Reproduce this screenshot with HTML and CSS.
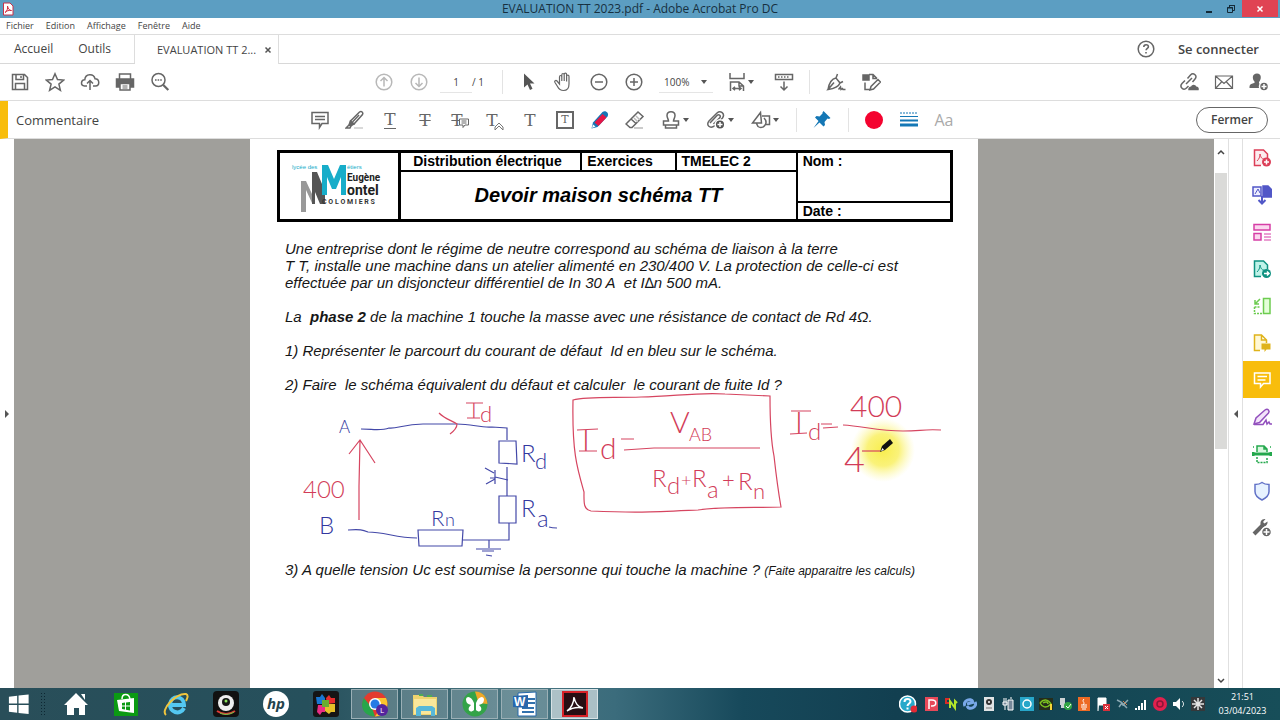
FILE: index.html
```html
<!DOCTYPE html>
<html lang="fr">
<head>
<meta charset="utf-8">
<meta name="viewport" content="width=device-width, initial-scale=1">
<title>EVALUATION TT 2023.pdf - Adobe Acrobat Pro DC</title>
<link rel="stylesheet" href="styles.css">
</head>
<body>
<header class="titlebar">
  <svg class="app-icon" viewBox="0 0 12 14"><path d="M1.500 1h6.500l3 3v9h-9.500z" fill="#fff" stroke="#c8324a"/><path d="M3 10.500c2-1 3-4 2.500-6.500c.500 3 2 4.500 4 4.500c-3-.500-5 .500-6.500 2" fill="none" stroke="#d22b3f"/></svg>
  <h1 class="title">EVALUATION TT 2023.pdf - Adobe Acrobat Pro DC</h1>
  <div class="window-buttons">
    <button class="win" aria-label="Réduire"><svg viewBox="0 0 12 12"><path d="M3 9h6" stroke="#142a38" stroke-width="2"/></svg></button>
    <button class="win" aria-label="Restaurer"><svg viewBox="0 0 12 12" fill="none" stroke="#142a38"><path d="M2.500 4.500h5v5h-5zM2 5h6M4.500 4v-1.500h5v5h-1.500M4 2.500h6"/></svg></button>
    <button class="win close" aria-label="Fermer la fenêtre"><svg viewBox="0 0 12 12"><path d="M3.500 3.500l5 5M8.500 3.500l-5 5" stroke="#fff" stroke-width="1.500"/></svg></button>
  </div>
</header>

<nav class="menubar" aria-label="Menu">
  <button>Fichier</button><button>Edition</button><button>Affichage</button><button>Fenêtre</button><button>Aide</button>
</nav>

<div class="tabs">
  <div class="tabs-home"><button>Accueil</button><button>Outils</button></div>
  <div class="tab-current"><span>EVALUATION TT 2...</span><button aria-label="Fermer l'onglet"><svg viewBox="0 0 8 8"><path d="M1.500 1.500l5 5M6.500 1.500l-5 5" stroke="#555" stroke-width="1.500"/></svg></button></div>
  <div class="tabs-account">
    <button aria-label="Aide en ligne"><svg class="ic" viewBox="0 0 20 20"><circle cx="10" cy="10" r="7.800"/><path d="M7.800 8c0-3 4.600-3 4.600-.300c0 1.800-2.300 1.600-2.300 3.600M10 13v1.600" stroke-width="1.600"/></svg></button>
    <button class="signin">Se connecter</button>
  </div>
</div>

<div class="toolbar main-tools">
  <div class="group">
    <button class="tool" aria-label="Enregistrer"><svg class="ic" viewBox="0 0 20 20"><path d="M2.500 2.500h12l3 3v12h-15zM6 2.500v5h7.500v-5M11 4v2M5.500 17.500v-6h9v6" /></svg></button>
    <button class="tool" aria-label="Favoris"><svg class="ic" viewBox="0 0 20 20"><path d="M10 1.800l2.500 5.800l6.100.500l-4.700 4l1.500 6.200l-5.400-3.400l-5.400 3.400l1.500-6.200l-4.700-4l6.100-.500z"/></svg></button>
    <button class="tool" aria-label="Envoyer"><svg class="ic" viewBox="0 0 20 20"><path d="M7 14h-2.500c-4.500-.500-3.500-6.500.300-6.300c.500-6.500 9-6.500 10.200-1c4.800 0 5 7 .500 7.300h-2.500M10 18v-9M7 11.500l3-3l3 3"/></svg></button>
    <button class="tool" aria-label="Imprimer"><svg class="ic" viewBox="0 0 20 20"><path d="M4.500 7v-5h11v5"/><path d="M1.500 7h17v8h-3v-3h-11v3h-3z" fill="#666"/><path d="M5 11.500h10v6.500h-10z" fill="#fff"/><path d="M7.500 14h5M7.500 16h5" stroke-width="1"/></svg></button>
    <button class="tool" aria-label="Rechercher"><svg class="ic" viewBox="0 0 20 20"><circle cx="8.500" cy="8" r="6.500"/><path d="M13.300 13l5 5" stroke-width="2.200"/><path d="M5 8h7" stroke-dasharray="1.600 1"/></svg></button>
  </div>
  <div class="group center">
    <button class="tool faint" aria-label="Page précédente"><svg class="ic" viewBox="0 0 20 20"><circle cx="10" cy="10" r="7.800"/><path d="M10 14.500v-9M6.500 9l3.500-3.500l3.500 3.500"/></svg></button>
    <button class="tool faint" aria-label="Page suivante"><svg class="ic" viewBox="0 0 20 20"><circle cx="10" cy="10" r="7.800"/><path d="M10 5.500v9M6.500 11l3.500 3.500l3.500-3.500"/></svg></button>
    <input class="page-number" value="1" aria-label="Numéro de page"><span class="page-total">/ 1</span>
    <span class="sep after-page"></span>
    <button class="tool" aria-label="Sélection"><svg class="ic" viewBox="0 0 20 20"><path d="M5 1.500v14l3.500-3l2.500 5.500l2.500-1.200l-2.500-5.300h4.500z" fill="#555" stroke="none"/></svg></button>
    <button class="tool" aria-label="Main"><svg class="ic thin" viewBox="0 0 20 20"><path d="M5.500 12v-7c0-2 2.300-2 2.300 0v4v-6c0-2 2.400-2 2.400 0v6v-6.500c0-2 2.400-1.800 2.400 0v7v-5c0-2 2.400-1.800 2.400 0v7.500c0 4-2 6.500-5.500 6.500c-3.500 0-5-2-6-4l-2.500-4c-1-1.800 1-2.600 2-1.500z"/></svg></button>
    <button class="tool" aria-label="Zoom arrière"><svg class="ic" viewBox="0 0 20 20"><circle cx="10" cy="10" r="7.800"/><path d="M6 10h8"/></svg></button>
    <button class="tool" aria-label="Zoom avant"><svg class="ic" viewBox="0 0 20 20"><circle cx="10" cy="10" r="7.800"/><path d="M6 10h8M10 6v8"/></svg></button>
    <span class="zoom"><select aria-label="Niveau de zoom"><option>100%</option></select><i class="caret"></i></span>
    <button class="tool fit" aria-label="Ajuster la page"><svg class="ic" viewBox="0 0 20 20"><path d="M3 1v5.500h14v-5.500M3.500 19v-9h8.500l4.500 4v5M12 10v4h4.500M6 16.500h8M8 14.800l-2 1.700l2 1.700M12 14.800l2 1.700l-2 1.700"/></svg><i class="caret"></i></button>
    <button class="tool scroll-mode" aria-label="Défilement"><svg class="ic" viewBox="0 0 20 20"><path d="M1.500 2.500h17v5h-17zM10 9.500v8.500M6.500 14.500l3.500 3.500l3.500-3.500"/><path d="M4 5h12" stroke-dasharray="1.500 1.500"/></svg></button>
    <span class="sep"></span>
    <button class="tool" aria-label="Signer"><svg class="ic" viewBox="0 0 20 20"><path d="M2 17.500c1-6 3-10.500 8-11.500l4 5c-1.500 4-5 5.500-12 6.500l6-7M10 6l1.500-4M14 11l3-1.500M12.500 17.500l2-2.500l.5 2.500l1.500-1l.5 1h2.500"/></svg></button>
    <button class="tool" aria-label="Modifier le document"><svg class="ic" viewBox="0 0 20 20"><path d="M2 3h6v5h-6z" fill="#666"/><path d="M8 2.500h4l4 4M12 2.500v4h4M4 10.500v7h5M9 18l1-3.500l7-7l2.500 2.500l-7 7z"/></svg></button>
  </div>
  <div class="group end">
    <button class="tool" aria-label="Partager un lien"><svg class="ic" viewBox="0 0 20 20"><path d="M7 12l6-6M8.500 6.500l3-3.500c3-3 7.500 1 4.500 4l-2.500 3M6 8.500l-3 3c-3 3.500 1.500 7.500 4.500 4.500l2-2"/><path d="M10 17.500c0-2 1.500-2.500 2.500-2c.5-3 4-2.500 4.300 0c1.500-.5 2.500.7 2.200 2z" fill="#666"/></svg></button>
    <button class="tool" aria-label="Courrier"><svg class="ic thin" viewBox="0 0 20 20"><path d="M1.500 4h17v12.500h-17zl8.500 7.500l8.500-7.500M1.500 16.500l6-6.500M18.500 16.500l-6-6.500"/></svg></button>
    <button class="tool" aria-label="Partager"><svg class="ic" viewBox="0 0 20 20"><path d="M8 1.500c5 0 4.500 6 2 8.500v1.500c2 .5 2.500 1 2 4.500h-11.500c0-4 1-4 5-5v-1.500c-2.500-2.500-2.500-8 2.500-8z" fill="#666" stroke="none"/><circle cx="15" cy="14.500" r="4.500" fill="#666" stroke="#fff"/><path d="M15 12v5M12.500 14.500h5" stroke="#fff"/></svg></button>
  </div>
</div>

<div class="toolbar comment-tools">
  <h2 class="panel-name">Commentaire</h2>
  <div class="group center">
    <button class="tool" aria-label="Note"><svg class="ic" viewBox="0 0 20 20"><path d="M2 2.500h16v11h-6l-2.500 4v-4h-7.500zM5 6.500h10M5 9.500h10"/></svg></button>
    <button class="tool" aria-label="Surligner"><svg class="ic" viewBox="0 0 20 20"><path d="M5.500 11l9-9c2-1.500 4 .5 3 2.500l-8.500 9.500l-3.500.5z"/><path d="M5.500 11l-1.500 4l1.500 1l3.500-2z" fill="#666"/><path d="M4 15l-3 3h4l1-2M7.500 12l6.500-7" /><path d="M9 18h9" stroke="#ccc"/></svg></button>
    <button class="tool" aria-label="Souligner"><span class="letter underlined">T</span></button>
    <button class="tool" aria-label="Barrer"><span class="letter struck">T</span></button>
    <button class="tool" aria-label="Remplacer"><span class="letter struck">T</span><svg class="mini" viewBox="0 0 10 10"><path d="M.500 1h9v6h-3.500l-2 2.500v-2.500h-3.500z" fill="#fff" stroke="#666"/><path d="M2.500 3h5M2.500 5h5" stroke="#666"/></svg></button>
    <button class="tool" aria-label="Insérer"><span class="letter">T</span><svg class="mini low" viewBox="0 0 10 10"><path d="M1 6l4-4l4 4v3l-4-4l-4 4z" fill="none" stroke="#777"/></svg></button>
    <button class="tool" aria-label="Texte"><span class="letter">T</span></button>
    <button class="tool" aria-label="Zone de texte"><span class="letter boxed">T</span></button>
    <button class="tool" aria-label="Crayon"><svg class="ic" viewBox="0 0 20 20"><path d="M1.500 18.500l1.500-6l9.500-10.500c3-2 7 1 5 4.500l-10 10.500z" fill="#1675b5" stroke="none"/><path d="M4.500 12.500l8-8.500l4 3.500l-8 8.500z" fill="#e51646" stroke="none"/><path d="M2 18l1-3.500l2.500 2z" fill="#fff" stroke="none"/></svg></button>
    <button class="tool" aria-label="Gomme"><svg class="ic" viewBox="0 0 20 20"><path d="M2 13l11-11l5 4.500l-11 11h-2l-4-3.500zM6 9l5 4.500"/><path d="M9 8l4 4M11 6l4 4M9 18h9" stroke="#bbb"/></svg></button>
    <button class="tool more" aria-label="Tampon"><svg class="ic" viewBox="0 0 20 20"><path d="M7.500 11c0-2-1.500-3-1.500-5.500c0-5 8-5 8 0c0 2.500-1.500 3.500-1.500 5.500h5v4h-15v-4zM4.500 15v3h11v-3"/></svg><i class="caret"></i></button>
    <button class="tool more" aria-label="Joindre"><svg class="ic" viewBox="0 0 20 20"><path d="M4 13l7-7.500c2-2 4.500.5 2.500 2.500l-6 6M9 15.500c-5 4-9.500-.5-6-4.500l8-8c3.500-3 8.500.5 5.500 5l-2 2"/><circle cx="14" cy="14.500" r="4.800" fill="#555" stroke="#fff"/><path d="M14 12v5M11.500 14.500h5" stroke="#fff"/></svg><i class="caret"></i></button>
    <button class="tool more" aria-label="Formes"><svg class="ic" viewBox="0 0 20 20"><path d="M9.500 2.500l-8 10.500h9zM11 6h7.500v8.500h-4M13 8c5 5-1 12-6 8.500l-1.500-3"/></svg><i class="caret"></i></button>
    <span class="sep"></span>
    <button class="tool" aria-label="Épingler"><svg class="ic" viewBox="0 0 20 20"><path d="M10.500 2.500l1-1.500l7 7l-1.500 1l-1.500-.500l-3 3.500l.500 3l-1.500 1.500l-4-4l-6 5.500l5-7l-3.500-3.500l1.500-1.500l3 .500l3-3z" fill="#1477b5" stroke="none"/></svg></button>
    <span class="sep"></span>
    <button class="tool" aria-label="Couleur"><span class="swatch"></span></button>
    <button class="tool" aria-label="Épaisseur"><svg class="ic blue" viewBox="0 0 20 20"><path d="M1 3h18" stroke-width="1" stroke-dasharray="2 1"/><path d="M1 6.500h18" stroke-width="1"/><path d="M1 10.500h18" stroke-width="2"/><path d="M1 15h18" stroke-width="3"/></svg></button>
    <button class="tool font-style" aria-label="Style du texte">Aa</button>
  </div>
  <div class="group end"><button class="done">Fermer</button></div>
</div>

<main class="workspace">
  <button class="pane-toggle left" aria-label="Volet de navigation"><svg viewBox="0 0 6 8"><path d="M1 0l4 4l-4 4z"/></svg></button>
  <section class="canvas">
    <article class="sheet">
      <table class="heading">
        <colgroup><col class="c-logo"><col class="c-subject"><col class="c-type"><col class="c-class"><col class="c-name"></colgroup>
        <tr class="r1">
          <td class="logo" rowspan="3">
            <svg viewBox="0 0 94 52" role="img" aria-label="Lycée des Métiers Eugène Montel Colomiers">
              <path d="M11 52v-31h5l6 13v-13h3v22h-3l-6-13v22z" fill="#999"/>
              <path d="M22 34v-22h5l5 12v-12h3v32h-5l-5-12v12h-3z" fill="#555"/>
              <path d="M32 35v-30h6l6 14l6-14h6v30h-5v-18l-5 12h-4l-5-12v18z" fill="#17adc9"/>
              <text x="2" y="9" class="lg-small">lycée des</text><text x="57" y="9" class="lg-small">étiers</text>
              <text x="57" y="21" class="lg-name">Eugène</text><text x="57" y="35" class="lg-name big">ontel</text>
              <text x="32" y="44" class="lg-town">C O L O M I E R S</text>
            </svg>
          </td>
          <td class="cell">Distribution électrique</td><td class="cell">Exercices</td><td class="cell">TMELEC 2</td><td class="cell name" rowspan="2">Nom :</td>
        </tr>
        <tr class="r2"><td class="doc-title" colspan="3" rowspan="2">Devoir maison schéma TT</td></tr>
        <tr class="r3"><td class="cell name">Date :</td></tr>
      </table>
      <div class="statement">
        <p>Une entreprise dont le régime de neutre correspond au schéma de liaison à la terre<br>T T, installe une machine dans un atelier alimenté en 230/400 V. La protection de celle-ci est<br>effectuée par un disjoncteur différentiel de In 30 A&nbsp; et I∆n 500 mA.</p>
        <p>La&nbsp; <strong>phase 2</strong> de la machine 1 touche la masse avec une résistance de contact de Rd 4Ω.</p>
        <p>1) Représenter le parcourt du courant de défaut&nbsp; Id en bleu sur le schéma.</p>
        <p>2) Faire&nbsp; le schéma équivalent du défaut et calculer&nbsp; le courant de fuite Id ?</p>
      </div>
      <svg class="ink" viewBox="277 393 676 168">
        <defs><radialGradient id="halo"><stop offset="0" stop-color="#f8ee4e"/><stop offset=".5" stop-color="#faf27a"/><stop offset="1" stop-color="#fdf9b0" stop-opacity="0"/></radialGradient></defs>
        <circle cx="883" cy="450" r="32" fill="url(#halo)"/>
        <g class="blue-ink">
          <path d="M361 429c12 0 20 2 28-1c8 1 15-4 34-4h34c15 0 24 4 35 3l15 1v12M499 441h17l1 23l-18-1zM507 467v29M499 496h17v27h-17zM509 523v17h-46M348 530c12-1 15 0 20 2c17 0 28 6 49 6M418 530h45l-1 16h-43zM489 540v8M476 549h25M482 551h12M486 555l6 1"/>
          <path d="M485 468l9 5M486 484l9-5M490 478h5M495 470v14M495 477l13 3"/>
          <text x="339" y="433" class="s17">A</text><text x="319" y="534" class="s24">B</text>
          <text x="521" y="462" class="s24">R</text><text x="535" y="469" class="s22">d</text>
          <text x="521" y="517" class="s24">R</text><text x="537" y="527" class="s24">a</text>
          <text x="431" y="526" class="s22">R</text><text x="445" y="526" class="s18">n</text>
          <path d="M549 527c3 1 5 1 8 1"/>
        </g>
        <g class="red-ink">
          <path d="M359 520v-34l1-46M349 454l11-14l15 23M439 413c6 6 12 7 18 11c0 4-3 7-7 10"/>
          <text x="303" y="498" class="s24">400</text>
          <text x="471" y="418" class="s22">I</text><path d="M466 403h17M467 418h13"/><text x="480" y="422" class="s22">d</text>
          <path d="M573 400c14-4 40-2 68-3c30 0 55-5 84-3l45 2c0 20 0 40 4 60c2 18 4 34 7 51c-25 1-55-1-83 3c-45 2-60 3-107 1c-8-1-7-10-7-19c-7-24-12-40-11-92z"/>
          <text x="582" y="451" class="s30">I</text><path d="M577 430l21-1M579 451h18"/><text x="600" y="459" class="s30">d</text>
          <path d="M621 439h13M624 450l30-2l106 0"/>
          <text x="670" y="433" class="s30">V</text>
          <text x="689" y="441" class="s18">AB</text>
          <text x="652" y="487" class="s24">R</text><text x="667" y="494" class="s24">d</text><text x="681" y="486" class="s18">+</text>
          <text x="692" y="487" class="s24">R</text><text x="707" y="498" class="s24">a</text><text x="722" y="488" class="s22">+</text>
          <text x="738" y="490" class="s24">R</text><text x="753" y="499" class="s22">n</text>
          <text x="795" y="433" class="s30">I</text><path d="M791 411h20M790 434l17-1"/><text x="808" y="440" class="s24">d</text>
          <path d="M821 424h11M823 428l15-1"/>
          <text x="850" y="417" class="s30">400</text>
          <path d="M843 425c20 1 35 6 60 6c18 0 20-2 38-1"/>
          <text x="844" y="472" class="s36">4</text><path d="M862 451h18"/>
        </g>
        <path d="M880 452l2-6l8-7l3 4l-8 7z" fill="#111"/><path d="M881 451l1.500-3l1.500 2z" fill="#fff"/>
      </svg>
      <p class="question-3">3) A quelle tension Uc est soumise la personne qui touche la machine ? <small>(Faite apparaitre les calculs)</small></p>
    </article>
  </section>
  <div class="scrollbar">
    <button aria-label="Défiler vers le haut"><svg viewBox="0 0 8 6"><path d="M1 5l3-3l3 3"/></svg></button>
    <div class="track"><div class="thumb"></div></div>
    <button aria-label="Défiler vers le bas"><svg viewBox="0 0 8 6"><path d="M1 1l3 3l3-3"/></svg></button>
  </div>
  <button class="pane-toggle right" aria-label="Volet des outils"><svg viewBox="0 0 6 8"><path d="M5 0l-4 4l4 4z"/></svg></button>
  <aside class="tool-pane">
    <button aria-label="Créer un PDF"><svg class="ic" viewBox="0 0 20 20" style="color:#dc3e57"><path d="M9 17.500h-6.500v-15.500h9l4 4v4" fill="#fcecef"/><path d="M5 13c2-2 3-4 3-7c1 4 2 5 4 5" stroke-width="1"/><circle cx="14.500" cy="14" r="4.500" fill="currentColor" stroke="none"/><path d="M14.500 11.500v5M12 14h5" stroke="#fff"/></svg></button>
    <button aria-label="Combiner"><svg class="ic" viewBox="0 0 20 20" style="color:#5157c7"><path d="M1 2h8v9h-8z" fill="#eef"/><path d="M11 1h5l3.500 3.500v7.500h-8.500z" fill="currentColor"/><path d="M3 9l3-5l2 4" stroke-width="1"/><path d="M10 11v7M6.500 15l3.500 3.500l3.500-3.500" stroke-width="2"/></svg></button>
    <button aria-label="Organiser les pages"><svg class="ic" viewBox="0 0 20 20" style="color:#d63fa6"><path d="M2 2.500h16v5.500h-16zM2 11.500h7v6.500h-7z" fill="#fbd7ef"/><path d="M12 12h7M12 15h7M12 18h7" stroke-width="1"/></svg></button>
    <button aria-label="Exporter"><svg class="ic" viewBox="0 0 20 20" style="color:#0f9281"><path d="M9 17.500h-6.500v-15.500h9l4 4v4" fill="#bff3e9"/><path d="M5 13c2-2 3-4 3-7c1 4 2 5 4 5" stroke-width="1"/><circle cx="14.500" cy="14.500" r="4.500" fill="currentColor" stroke="none"/><path d="M12 14.500h5M15 12.500l2 2l-2 2" stroke="#fff"/></svg></button>
    <button aria-label="Comparer"><svg class="ic" viewBox="0 0 20 20" style="color:#6dcc50"><path d="M11.500 2.500h6.500v15h-6.500z" fill="#e4ffd9"/><path d="M8 3l-5 5M3 4v4h4"/><path d="M2.500 11v6.500h8M2.500 11h6" stroke-dasharray="2 1"/></svg></button>
    <button aria-label="Envoyer pour commentaire"><svg class="ic" viewBox="0 0 20 20" style="color:#dfb31b"><path d="M8 17.500h-5.500v-15.500h7l5 5v3M9.500 2v5h5" fill="#fff8d5"/><path d="M9.500 10.500h9v6h-4l-2 2.500v-2.500h-3z" fill="currentColor" stroke="none"/></svg></button>
    <button class="active" aria-label="Commentaire"><svg class="ic" viewBox="0 0 20 20" style="color:#fff"><path d="M2.500 3h15.500v10.500h-6.500l-3 3.500v-3.500h-6zM5.500 6.500h9.500M5.500 10h8"/></svg></button>
    <button aria-label="Remplir et signer"><svg class="ic" viewBox="0 0 20 20" style="color:#9250bd"><path d="M2 17l2-6l9-8c3-2 5 1 3.500 3l-9 9.500z" fill="#f3e4fa"/><path d="M2 17.500h9l3-4.500l1 4l2-2l1 2h2"/></svg></button>
    <button aria-label="Numérisation"><svg class="ic" viewBox="0 0 20 20" style="color:#24a84d"><path d="M5 8v-6h7l3 3v3M12 2v3h3" fill="#d9f8df"/><path d="M1 8v4M19 8v4M1 10h18" stroke-width="3"/><path d="M5 13v5.500h10v-5.500" stroke-dasharray="2 1"/><path d="M1 3h1M18 3h1"/></svg></button>
    <button aria-label="Protéger"><svg class="ic" viewBox="0 0 20 20" style="color:#6171c7"><path d="M10 1.500c2 1.500 4 2 7 2v7c0 4-4 7-7 8.500c-3-1.500-7-4.500-7-8.500v-7c3 0 5-.500 7-2z" fill="#e7f2ff"/></svg></button>
    <button aria-label="Plus d'outils"><svg class="ic" viewBox="0 0 20 20"><path d="M2 16l9-9" stroke-width="4"/><path d="M13.500 1c-4-.500-6 3-4.500 6.500c3 2.500 7 0 6.500-4l-3 2l-1.500-1.500z" fill="#666" stroke="none"/><circle cx="14.500" cy="14" r="5" fill="#666" stroke="#fff"/><path d="M14.500 11v6M11.500 14h6" stroke="#fff"/></svg></button>
  </aside>
</main>

<footer class="taskbar">
  <button class="start" aria-label="Démarrer"><svg viewBox="0 0 24 24"><path d="M1 4l9-1v8.500h-9zM11.500 2.700l11-1.200v10h-11zM1 13h9v8.500l-9-1zM11.500 13h11v10l-11-1.300z" fill="#fff"/></svg></button>
  <span class="grip"></span>
  <div class="pinned">
    <button aria-label="Accueil"><svg viewBox="0 0 26 26"><path d="M13 2l12 12h-3v10h-6v-7h-5v7h-7v-10h-3zM18 3h4v6z" fill="#fff"/></svg></button>
    <button aria-label="Store"><svg viewBox="0 0 26 26"><path d="M1 2h24v23h-24z" fill="#0b9a13"/><path d="M9 8c0-6 7-6 8 0" fill="none" stroke="#fff" stroke-width="1.500"/><path d="M4 9l17-2v15l-15-2z" fill="#fff"/><path d="M9 12l3-.500v3h-3zM13 11.500l4-.500v3.500h-4zM9 15.500h3v3l-3-.500zM13 15.500h4v4l-4-.800z" fill="#0b9a13"/></svg></button>
    <button aria-label="Internet Explorer"><svg viewBox="0 0 26 26"><path d="M21 17c-4 8-15 4-14-4c1-9 14-9 14 1h-13" fill="none" stroke="#54c8f1" stroke-width="4"/><path d="M3 24c-6-5 10-22 20-21c3 1 1 5 0 7" fill="none" stroke="#f0c53d" stroke-width="2"/></svg></button>
    <button aria-label="Webcam"><svg viewBox="0 0 26 26"><rect width="26" height="26" rx="4" fill="#111"/><path d="M4 20c6 4 12 4 18 0" fill="none" stroke="#e23a36" stroke-width="2"/><path d="M7 22c4 2 9 2 14-1" fill="none" stroke="#5fd34a"/><circle cx="13" cy="12" r="8" fill="#eee"/><circle cx="13" cy="11" r="4" fill="#151515"/><circle cx="13" cy="10" r="1.500" fill="#8ae35b"/></svg></button>
    <button aria-label="HP"><svg viewBox="0 0 26 26"><circle cx="13" cy="13" r="13" fill="#fff"/><text x="4" y="18" class="hp">hp</text></svg></button>
    <button aria-label="Puzzle"><svg viewBox="0 0 26 26"><rect width="26" height="26" rx="3" fill="#151515"/><path d="M3 6h4l2-3l3 4v6h-8z" fill="#1877d2"/><path d="M13 7l3-3l2 3h4v5l-8 1z" fill="#e62d2d"/><path d="M5 14h7v7h-3l-2 3l-3-3z" fill="#e92d85"/><path d="M12 13h10v8h-4l-2 2l-4-3z" fill="#e6c128"/><path d="M9 9h7v7h-7z" fill="#69ad30"/></svg></button>
  </div>
  <div class="running">
    <button aria-label="Chrome"><svg viewBox="0 0 26 26"><circle cx="13" cy="13" r="12.500" fill="#e33b2e"/><path d="M2 7l8 10l3 8.500c-11 0-16-10-11-18.500z" fill="#27a64b"/><path d="M13 7h11c4 8-1 18-11 18.500l6-9z" fill="#fbc52d"/><circle cx="13" cy="13" r="6" fill="#fff"/><circle cx="13" cy="13" r="4.500" fill="#267be5"/><circle cx="20" cy="19" r="6" fill="#55249d"/><text x="18" y="22" class="badge">L</text></svg></button>
    <button aria-label="Explorateur"><svg viewBox="0 0 26 26"><path d="M1 4h9l2 2h13v18h-24z" fill="#efd36e"/><path d="M2 8h22v15h-22z" fill="#fae79b"/><path d="M7 4h4M15 5h5" stroke="#4eab55" stroke-width="2"/><path d="M4 25v-8l3-2h13l3 2v8h-4v-5h-10v5z" fill="#58b8d9"/></svg></button>
    <button aria-label="Papillon"><svg viewBox="0 0 26 26"><circle cx="13" cy="13" r="12.500" fill="#33a348"/><path d="M13 .500c8 0 12 6 12.500 12.500l-9-1z" fill="#f0a72a"/><path d="M12 12c-2-6-7-8-8-4c0 4 2 5 5 6c-5 4-1 9 3 5zM14 12c2-6 7-8 8-4c0 4-2 5-5 6c5 4 1 9-3 5z" fill="#fff"/></svg></button>
    <button aria-label="Word"><svg viewBox="0 0 26 26"><path d="M6 2l18-1v24h-18z" fill="#fff" stroke="#2769aa"/><path d="M16 8h7M16 12h7M10 17h12M10 21h12" stroke="#3271ad" stroke-width="2"/><path d="M1 5l15-1v13l-15-1z" fill="#2867ac"/><text x="2" y="15" class="word">W</text></svg></button>
    <button class="focused" aria-label="Acrobat"><svg viewBox="0 0 26 26"><rect x="1" y="1" width="24" height="24" fill="#270e13" stroke="#d62228" stroke-width="2"/><path d="M5 20c4-2 7-9 7-14c1 6 4 10 9 11c-5-1-10-1-16 3" fill="none" stroke="#fff" stroke-width="1.500"/></svg></button>
  </div>
  <div class="tray">
    <svg class="help-icon" viewBox="0 0 18 18"><circle cx="8.500" cy="9" r="8" fill="#28a9ca" stroke="#fff" stroke-width="1.500"/><path d="M5.500 7c0-4 6-4 6-.500c0 2-3 2-3 4.500M8.500 12.500v2" fill="none" stroke="#fff" stroke-width="2"/><circle cx="15" cy="14" r="3.500" fill="#e32934"/></svg>
    <svg viewBox="0 0 14 14"><path d="M0 0h13v14h-13z" fill="#e64959"/><path d="M4 12v-9h3c5 0 5 6 0 6h-1" fill="none" stroke="#fff" stroke-width="1.500"/></svg>
    <svg viewBox="0 0 14 14"><path d="M1 1h5v2h-3v2h3v2h-5z" fill="#d82b28"/><path d="M6 11v-7l5 7v-7l2 2" fill="none" stroke="#b3e52b" stroke-width="2"/></svg>
    <svg viewBox="0 0 14 14"><path d="M2 9c-3-5 6-9 8-4M12 5c3 5-6 9-8 4M4 7l7-2" fill="none" stroke="#79a8e8" stroke-width="3"/></svg>
    <svg viewBox="0 0 14 14"><path d="M2 0h10v14h-10z" fill="#e1e4e5"/><circle cx="7" cy="5" r="3" fill="#333"/><circle cx="7" cy="5" r="1" fill="#fff"/><path d="M4 11h6" stroke="#777"/></svg>
    <svg viewBox="0 0 14 14"><path d="M7 3h5v10h-5zM9 1h2M3 1v4M5 1v4M2 5h4v3h-4zM4 8v5" fill="#789" stroke="#fff"/></svg>
    <svg viewBox="0 0 14 14"><path d="M0 0h14v14h-14z" fill="#27a6c9"/><circle cx="7" cy="7" r="4" fill="none" stroke="#fff" stroke-width="1.500"/></svg>
    <svg viewBox="0 0 14 14"><path d="M0 1h14v12h-14z" fill="#252d1b"/><path d="M1 6c4-5 9-3 11 1c-5 5-9 3-11-1M4 6c3-2 5-1 5 1" fill="none" stroke="#7cc321" stroke-width="1.500"/><path d="M12 7v6" stroke="#f6d539" stroke-width="2"/></svg>
    <svg viewBox="0 0 14 14"><path d="M2 1h5v6h2v4h-6v-3h-1z" fill="#ccd2d4"/><circle cx="10" cy="9" r="4" fill="#31a543"/><path d="M8 9l2 2l3-4" fill="none" stroke="#fff"/></svg>
    <svg viewBox="0 0 14 14"><path d="M1 0h12v14h-12z" fill="#ed6a24"/><path d="M7 2c-3 3 2 3-1 6M4 8h6M4 10h6M5 12h4" fill="none" stroke="#fff"/></svg>
    <svg viewBox="0 0 14 14"><path d="M2 14v-13h8v7h-7" fill="#fff" stroke="#fff"/><path d="M7 7h7v7h-7z" fill="#d9303b"/><path d="M9 9l3 3M12 9l-3 3" stroke="#fff"/></svg>
    <svg viewBox="0 0 14 14"><path d="M2 3l4 2l2 3l5-5M4 10l3-4l5 5" fill="none" stroke="#8ba9b3" stroke-width="1.500"/><path d="M8 4l4 4" stroke="#d6804d"/></svg>
    <svg viewBox="0 0 14 14"><path d="M2 13v-2M5 13v-4M8 13v-7M11 13v-10" stroke="#fff" stroke-width="2"/></svg>
    <svg viewBox="0 0 14 14"><circle cx="7" cy="7" r="7" fill="#e2214e"/><circle cx="7" cy="7" r="3" fill="none" stroke="#8c1638" stroke-width="1.500"/></svg>
    <svg viewBox="0 0 14 14"><path d="M1 5h3l4-4v12l-4-4h-3z" fill="#fff"/><path d="M10 4c2 2 2 4 0 6" fill="none" stroke="#fff"/></svg>
    <svg viewBox="0 0 14 14"><path d="M0 0h14v14h-14z" fill="#35383a"/><path d="M7 1v12M1 7h12M3 3l8 8M11 3l-8 8" stroke="#e5e5e5" stroke-width="1.500"/></svg>
  </div>
  <div class="clock"><time>21:51</time><span>03/04/2023</span></div>
</footer>
</body>
</html>
```
FILE: styles.css
```css
* { box-sizing: border-box; }
body {
  margin: 0;
  min-height: 100vh;
  display: flex;
  flex-direction: column;
  font: 12px/16px "Open Sans", "Noto Sans", sans-serif;
  color: #444;
  background: #fff;
}
button, input, select { font: inherit; color: inherit; border: 0; padding: 0; margin: 0; background: none; }
button { display: flex; align-items: center; justify-content: center; }
svg { display: block; flex: none; }
h1, h2 { margin: 0; font-size: inherit; font-weight: 400; }
.ic { width: 20px; height: 20px; fill: none; stroke: currentColor; stroke-width: 1.5; color: #666; }
.ic.thin { stroke-width: 1.2; }
.ic.blue { color: #1477b5; }
.caret { border: 3px solid transparent; border-top: 4px solid #555; border-bottom: 0; flex: none; }

.titlebar { height: 18px; background: #5c9ec2; display: grid; grid-template-columns: 1fr auto 1fr; align-items: center; }
.app-icon { width: 12px; height: 14px; margin-left: 2px; }
.title { color: #17303f; line-height: 18px; }
.window-buttons { display: flex; justify-content: flex-end; height: 17px; align-self: start; margin-right: 2px; }
.win { width: 22px; }
.win svg { width: 12px; height: 12px; }
.win.close { width: 36px; background: #e04353; }

.menubar { height: 17px; display: flex; gap: 12px; padding-left: 6px; font-size: 9px; border-bottom: 1px solid #ddd; }
.tabs { height: 29px; display: flex; border-bottom: 1px solid #d8d8d8; }
.tabs-home { display: flex; gap: 25px; padding: 0 23px 0 14px; border-right: 1px solid #ddd; }
.tab-current { display: flex; align-items: center; gap: 8px; padding: 0 6px 0 22px; font-size: 11px; border-right: 1px solid #ddd; background: #fff; margin-bottom: -1px; }
.tab-current svg { width: 8px; height: 8px; }
.tabs-account { margin-left: auto; display: flex; gap: 22px; padding-right: 21px; }
.signin { font-size: 13px; font-weight: 600; }

.toolbar { display: grid; grid-template-columns: 1fr auto 1fr; align-items: center; border-bottom: 1px solid #ddd; }
.main-tools { height: 37px; padding: 0 4px 0 2px; }
.comment-tools { height: 38px; border-left: 8px solid #f8bd0c; padding: 0 12px 0 8px; }
.group { display: flex; align-items: center; }
.group.end { justify-content: flex-end; }
.main-tools .center { margin-right: 24px; }
.comment-tools .center { margin-right: 20px; }
.tool { width: 35px; height: 30px; }
.faint .ic { color: #b8b8b8; }
.page-number { width: 32px; height: 22px; margin-left: 4px; text-align: center; font-size: 10px; border-bottom: 1px solid #e5e5e5; }
.page-total { width: 16px; font-size: 10px; white-space: nowrap; }
.sep { width: 1px; height: 24px; margin: 0 8px; background: #e3e3e3; }
.sep.after-page { margin-left: 14px; }
.zoom { display: flex; align-items: center; margin-left: 8px; width: 54px; height: 22px; border-bottom: 1px solid #e5e5e5; }
.zoom select { appearance: none; width: 42px; padding-left: 5px; font-size: 10px; }
.fit { margin-left: 10px; gap: 1px; }
.scroll-mode { margin-left: 8px; }
.more { width: 45px; gap: 2px; }
.panel-name { font-size: 13px; }
.letter { font: 17px/18px "DejaVu Serif", serif; color: #666; }
.underlined { border-bottom: 1px solid #666; line-height: 17px; }
.struck { text-decoration: line-through; text-decoration-thickness: 1px; }
.boxed { font-size: 11px; line-height: 14px; border: 2px solid #666; width: 18px; height: 18px; }
.mini { width: 10px; height: 10px; margin: 6px 0 0 -4px; }
.mini.low { margin-top: 12px; }
.swatch { width: 18px; height: 18px; border-radius: 50%; background: #f4032f; }
.font-style { color: #aaa; font-size: 16px; }
.done { width: 72px; height: 26px; border: 1px solid #666; border-radius: 13px; font-weight: 600; }

.workspace { flex: 1; display: flex; }
.pane-toggle { width: 14px; background: #fff; }
.pane-toggle.right { width: 15px; border: solid #e0e0e0; border-width: 0 1px; }
.pane-toggle svg { width: 6px; height: 8px; fill: #555; }
.canvas { flex: 1; display: flex; justify-content: center; background: #a09f9b; }
.sheet { width: 728px; max-width: 100%; background: #fff; padding: 11px 25px 20px 27px; font: italic 15px/17px "Liberation Sans", Arial, sans-serif; color: #161616; }
.heading { width: 100%; border-collapse: collapse; table-layout: fixed; color: #000; font-style: normal; font-weight: 700; border: 3px solid #000; }
.heading td { border: 2px solid #000; padding: 0 5px; }
.c-logo { width: 18%; } .c-subject { width: 27%; } .c-type { width: 14%; } .c-class { width: 18%; } .c-name { width: 23%; }
.r1 { height: 19px; } .r2 { height: 31px; } .r3 { height: 18px; }
.heading .cell { line-height: 16px; font-size: 14px; white-space: nowrap; }
.heading .cell:nth-child(2) { padding-left: 12px; }
.heading .name { vertical-align: top; }
.heading .doc-title { text-align: center; font-size: 20px; font-style: italic; line-height: 22px; }
.heading .logo { padding: 0 10px; border-right-width: 3px; }
.logo svg { width: 94px; height: 52px; }
.lg-small { font: 6px "Liberation Sans", sans-serif; fill: #17adc9; }
.lg-name { font: 700 10px "Roboto", sans-serif; fill: #222; }
.lg-name.big { font-size: 14px; }
.lg-town { font: 700 7px "Roboto", sans-serif; fill: #333; }
.statement { padding: 18px 0 0 8px; }
.statement p { margin: 0 0 17px; }
.statement p:last-child { margin: 0; }
.question-3 { margin: 0 0 0 8px; }
.question-3 small { font-size: 12px; }
.ink { width: 100%; overflow: visible; }
.ink g { fill: none; stroke-width: 1.2; font-family: "Lato", sans-serif; font-style: normal; font-weight: 300; }
.ink .blue-ink { stroke: #4348a8; }
.ink .red-ink { stroke: #d64560; }
.ink text { stroke: none; }
.blue-ink text { fill: #3338a0; }
.red-ink text { fill: #d23c58; }
.s17 { font-size: 17px; } .s18 { font-size: 18px; } .s22 { font-size: 22px; } .s24 { font-size: 24px; } .s30 { font-size: 30px; } .s36 { font-size: 36px; }

.scrollbar { width: 14px; display: flex; flex-direction: column; background: #fff; padding-top: 6px; }
.scrollbar button { height: 14px; }
.scrollbar svg { width: 8px; height: 6px; fill: none; stroke: #444; stroke-width: 1.5; }
.track { flex: 1; padding-top: 14px; }
.thumb { height: 55%; margin: 0 1px; background: #dadad8; }
.tool-pane { width: 37px; }
.tool-pane button { width: 100%; height: 37px; }
.tool-pane .active { background: #f8bd0c; }

.taskbar { height: 32px; display: flex; align-items: center; background: linear-gradient(90deg, #294e59, #26505c 24%, #4a7580 40%, #3b6c7c 48%, #17495b 58%, #123f50 70%, #174e59); color: #fff; }
.start { width: 38px; }
.start svg { width: 22px; height: 22px; }
.grip { width: 7px; height: 24px; margin: 0 4px 0 2px; background: radial-gradient(circle, #0d2732 1px, transparent 1px) 0 0 / 3px 3px; }
.pinned { display: flex; }
.pinned button { width: 50px; height: 32px; }
.pinned svg, .running svg { width: 26px; height: 26px; }
.running { display: flex; gap: 3px; }
.running button { width: 47px; height: 30px; border: 1px solid #9bb0b6; background: #ffffff30; }
.running .focused { background: #ffffff90; border-color: #d8e2e5; }
.hp { font: italic 700 15px "Open Sans", sans-serif; fill: #24434d; }
.badge { font: 8px "Open Sans", sans-serif; fill: #fff; }
.word { font: 700 12px "Liberation Sans", sans-serif; fill: #fff; }
.tray { margin-left: auto; display: flex; align-items: center; gap: 5px; }
.tray svg { width: 14px; height: 14px; }
.tray .help-icon { width: 18px; height: 18px; margin-right: 3px; }
.clock { width: 75px; display: flex; flex-direction: column; align-items: center; font-size: 9px; line-height: 14px; }
```
